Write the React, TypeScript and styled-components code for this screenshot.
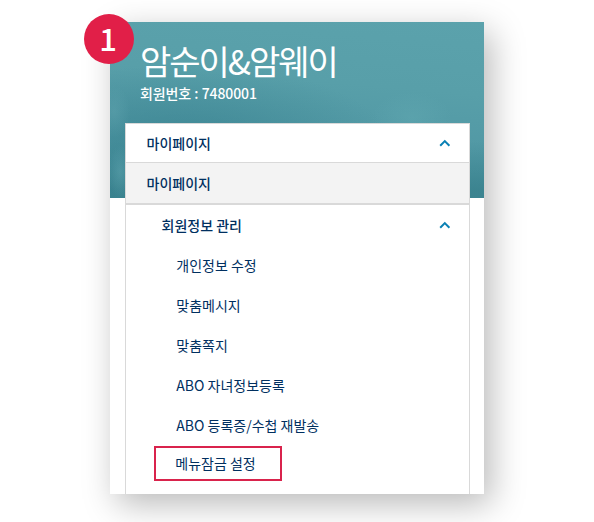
import React from 'react';
import styled, { createGlobalStyle } from 'styled-components';

const GlobalStyle = createGlobalStyle`
  * { box-sizing: border-box; }
  body {
    margin: 0;
    background: #fff;
    overflow: hidden;
    font-family: "Noto Sans CJK KR", "Noto Sans", sans-serif;
  }
`;

const Page = styled.main`
  width: 594px;
  height: 522px;
  padding: 22px 110px 28px;
  overflow: hidden;
`;

const Panel = styled.section`
  position: relative;
  display: flex;
  flex-direction: column;
  height: 472px;
  padding: 0 14px 0 15px;
  background:
    radial-gradient(ellipse 16px 26px at 4px 90px, rgba(104, 172, 182, 0.35), transparent) 0 0 / 100% 176px no-repeat,
    radial-gradient(ellipse 12px 26px at 10px 150px, rgba(104, 172, 182, 0.4), transparent) 0 0 / 100% 176px no-repeat,
    radial-gradient(ellipse 40px 26px at 302px 96px, rgba(104, 176, 184, 0.3), transparent) 0 0 / 100% 176px no-repeat,
    radial-gradient(ellipse 210px 75px at 70px 118px, rgba(48, 122, 136, 0.55), transparent) 0 0 / 100% 176px no-repeat,
    linear-gradient(180deg, transparent 68%, rgba(54, 126, 138, 0.75) 95%) 0 0 / 100% 176px no-repeat,
    linear-gradient(185deg, #5ba2ac 0%, #589fa9 35%, #5299a5 60%, #4a94a1 100%) 0 0 / 100% 176px no-repeat,
    #fff;
  box-shadow: 7px 10px 32px rgba(0, 0, 0, 0.28);
`;

const Badge = styled.span`
  position: absolute;
  left: -26px;
  top: -8px;
  display: flex;
  align-items: center;
  justify-content: center;
  width: 50px;
  height: 50px;
  padding: 0 2px 3px 0;
  border-radius: 50%;
  background: #e11f48;
  color: #fff;
  font-size: 31px;
  font-weight: 500;
  line-height: 1;
`;

const Header = styled.header`
  height: 101px;
  padding: 18px 15px 0;
  color: #fff;
`;

const MemberName = styled.h1`
  margin: 0 0 1px;
  font-size: 34px;
  font-weight: 400;
  line-height: 42px;
  letter-spacing: -2px;
  white-space: nowrap;
`;

const MemberNumber = styled.p`
  margin: 0;
  font-size: 14px;
  font-weight: 500;
  line-height: 20px;
  letter-spacing: -0.1px;
  word-spacing: 0.2px;
`;

const Menu = styled.nav`
  flex: 1;
  display: flex;
  flex-direction: column;
  border: solid #d9d9d9;
  border-width: 1px 1px 0;
  background: #fff;
  color: #002f5f;
  font-size: 14px;
`;

const SectionRow = styled.div<{ $level?: number; $current?: boolean }>`
  display: flex;
  align-items: center;
  justify-content: space-between;
  flex: none;
  height: ${(p) => (p.$current ? 42 : p.$level === 2 ? 40 : 39)}px;
  padding: 0 18px 0 ${(p) => (p.$level === 2 ? 35.5 : 20.5)}px;
  border-bottom: ${(p) => (p.$current ? '2px' : p.$level === 2 ? '0' : '1px')} solid #d9d9d9;
  background: ${(p) => (p.$current ? '#f3f3f3' : 'transparent')};
  font-weight: 500;
`;

const SubList = styled.ul`
  margin: 0;
  padding: 0;
  list-style: none;
`;

const SubItem = styled.li`
  display: flex;
  align-items: center;
  height: 40px;
  padding-left: 50.3px;
`;

const HighlightedItem = styled.li`
  display: flex;
  align-items: center;
  width: 128px;
  height: 35px;
  margin: 1px 0 0 28px;
  padding: 0 0 2px 19.3px;
  border: 2px solid #d9234c;
`;

const ChevronIcon = styled.svg`
  display: block;
  width: 12px;
  height: 8px;
  fill: none;
  stroke: #0a80b4;
  stroke-width: 2;
`;

const Chevron = () => (
  <ChevronIcon viewBox="0 0 12 8" aria-hidden="true">
    <path d="M1.2 6.7 5.8 2.1l4.6 4.6" />
  </ChevronIcon>
);

const items = ['개인정보 수정', '맞춤메시지', '맞춤쪽지', 'ABO 자녀정보등록', 'ABO 등록증/수첩 재발송'];

export default function App() {
  return (
    <Page>
      <GlobalStyle />
      <Panel>
        <Header>
          <MemberName>암순이&amp;암웨이</MemberName>
          <MemberNumber>회원번호 : 7480001</MemberNumber>
        </Header>
        <Menu>
          <SectionRow>
            마이페이지
            <Chevron />
          </SectionRow>
          <SectionRow $current>마이페이지</SectionRow>
          <SectionRow $level={2}>
            회원정보 관리
            <Chevron />
          </SectionRow>
          <SubList>
            {items.map((label) => (
              <SubItem key={label}>{label}</SubItem>
            ))}
            <HighlightedItem>메뉴잠금 설정</HighlightedItem>
          </SubList>
        </Menu>
        <Badge>1</Badge>
      </Panel>
    </Page>
  );
}
